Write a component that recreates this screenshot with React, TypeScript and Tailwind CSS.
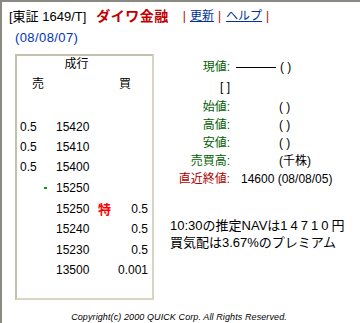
import React from "react";

const jp = "font-['Liberation_Sans','Noto_Sans_CJK_JP',sans-serif]";

type Row = { sell?: string; price: string; mark?: "tick" | "toku"; buy?: string; h: string };

const rows: Row[] = [
  { sell: "0.5", price: "15420", h: "h-[20px]" },
  { sell: "0.5", price: "15410", h: "h-[20px]" },
  { sell: "0.5", price: "15400", h: "h-[20px]" },
  { price: "15250", mark: "tick", h: "h-[22px]" },
  { price: "15250", mark: "toku", buy: "0.5", h: "h-[20px]" },
  { price: "15240", buy: "0.5", h: "h-[20px]" },
  { price: "15230", buy: "0.5", h: "h-[21px]" },
  { price: "13500", buy: "0.001", h: "h-[20px]" },
];

function BookRow({ r }: { r: Row }) {
  return (
    <div className={`flex items-center ${r.h}`}>
      <div className="w-[27px] pl-[3px]">{r.sell ?? ""}</div>
      <div className="w-[12px] flex items-center">
        {r.mark === "tick" ? <span className="block w-[3px] h-[2px] bg-[#00a000]" /> : null}
      </div>
      <div className="w-[42px]">{r.price}</div>
      <div className="w-[20px] text-[#ff0000] font-bold text-[13px]">{r.mark === "toku" ? "特" : ""}</div>
      <div className="w-[30px] text-right">{r.buy ?? ""}</div>
    </div>
  );
}

function Info(props: { label: string; red?: boolean; children?: React.ReactNode }) {
  return (
    <div className="flex items-center h-[18px]">
      <div className={`w-[70px] text-right ${props.red ? "text-[#b00000]" : "text-[#006000]"}`}>{props.label}</div>
      <div className="pl-[6px]">{props.children}</div>
    </div>
  );
}

export default function App() {
  return (
    <div className={`w-[360px] h-[323px] bg-white border-t-2 border-l-2 border-[#8a8a84] text-black text-[12px] leading-none ${jp}`}>
      <div className="flex items-center pl-[7px] pt-[7px] h-[21px]">
        <span className="text-[13px]">[東証 1649/T]</span>
        <span className="ml-[10px] text-[#c00000] font-bold text-[14px] tracking-[0.5px]">ダイワ金融</span>
        <span className="ml-[14px] text-[#c00000]">|</span>
        <span className="ml-[4px] text-[#003399] underline">更新</span>
        <span className="ml-[4px] text-[#c00000]">|</span>
        <span className="ml-[5px] text-[#003399] underline">ヘルプ</span>
        <span className="ml-[4px] text-[#c00000]">|</span>
      </div>
      <div className="pl-[13px] pt-[8px] text-[13px] tracking-[0.4px] text-[#0033bb]">(08/08/07)</div>

      <div className="flex mt-[10px]">
        <div className="ml-[13px] w-[139px] h-[246px] border-2 border-t-[#c4c0ae] border-l-[#c4c0ae] border-r-[#d8d5c6] border-b-[#d8d5c6]">
          <div className="text-center pt-[2px] pr-[16px] h-[18px]">成行</div>
          <div className="flex h-[20px] items-center">
            <span className="ml-[15px]">売</span>
            <span className="ml-[75px]">買</span>
          </div>
          <div className="h-[23px]" />
          {rows.map((r, i) => (
            <BookRow key={i} r={r} />
          ))}
        </div>

        <div className="ml-[6px] pt-[4px]">
          <Info label="現値:">
            <span className="flex items-center">
              <span className="block w-[40px] h-px bg-black" />
              <span className="ml-[4px]">( )</span>
            </span>
          </Info>
          <div className="h-[22px] flex items-center pl-[60px]">[ ]</div>
          <Info label="始値:"><span className="pl-[43px]">( )</span></Info>
          <Info label="高値:"><span className="pl-[43px]">( )</span></Info>
          <Info label="安値:"><span className="pl-[43px]">( )</span></Info>
          <Info label="売買高:"><span className="pl-[43px]">(千株)</span></Info>
          <Info label="直近終値:" red>
            <span className="pl-[5px]">14600 (08/08/05)</span>
          </Info>
          <div className="mt-[29px] ml-[10px] text-[13px] leading-[17px]">
            <div>
              10:30の推定NAVは<span className="tracking-[3px]">14710</span>円
            </div>
            <div>買気配は3.67%のプレミアム</div>
          </div>
        </div>
      </div>

      <div className="text-center italic text-[9px] tracking-[0.1px] pt-[13px] pr-[4px] font-['Liberation_Sans',sans-serif]">
        Copyright(c) 2000 QUICK Corp. All Rights Reserved.
      </div>
    </div>
  );
}
